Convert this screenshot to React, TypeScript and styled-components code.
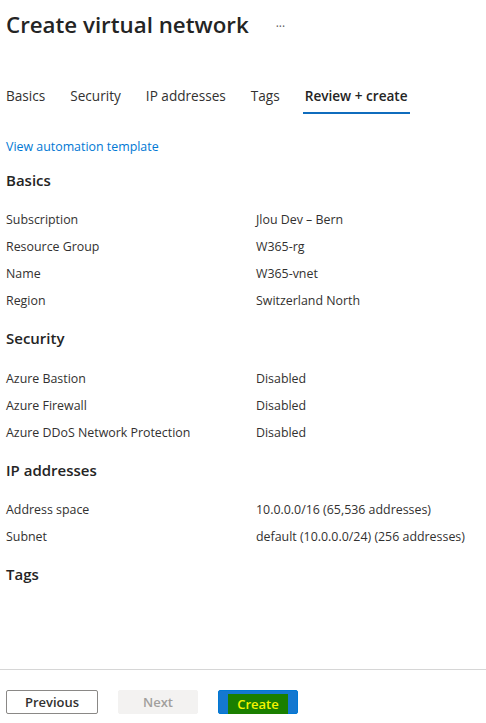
import React from "react";
import styled, { createGlobalStyle } from "styled-components";

const GlobalStyle = createGlobalStyle`
  html, body {
    margin: 0;
    padding: 0;
    background: #ffffff;
  }
  body {
    font-family: "Segoe UI", "Open Sans", "Noto Sans", sans-serif;
    color: #323130;
  }
  * {
    box-sizing: border-box;
  }
`;

type Row = { label: string; value: string };
type Section = { title: string; rows: Row[] };

const tabs = ["Basics", "Security", "IP addresses", "Tags", "Review + create"];

const sections: Section[] = [
  {
    title: "Basics",
    rows: [
      { label: "Subscription", value: "Jlou Dev – Bern" },
      { label: "Resource Group", value: "W365-rg" },
      { label: "Name", value: "W365-vnet" },
      { label: "Region", value: "Switzerland North" },
    ],
  },
  {
    title: "Security",
    rows: [
      { label: "Azure Bastion", value: "Disabled" },
      { label: "Azure Firewall", value: "Disabled" },
      { label: "Azure DDoS Network Protection", value: "Disabled" },
    ],
  },
  {
    title: "IP addresses",
    rows: [
      { label: "Address space", value: "10.0.0.0/16 (65,536 addresses)" },
      { label: "Subnet", value: "default (10.0.0.0/24) (256 addresses)" },
    ],
  },
  { title: "Tags", rows: [] },
];

const App = () => {
  return (
    <>
      <GlobalStyle />
      <Page>
        <TitleRow>
          <Title>Create virtual network</Title>
          <More>···</More>
        </TitleRow>
        <TabBar>
          {tabs.map((t, i) => (
            <Tab key={t} $active={i === tabs.length - 1}>
              {t}
            </Tab>
          ))}
        </TabBar>
        <Content>
          <TemplateLink href="#">View automation template</TemplateLink>
          {sections.map((s) => (
            <SectionBlock key={s.title}>
              <SectionTitle>{s.title}</SectionTitle>
              {s.rows.length > 0 && (
                <Grid>
                  {s.rows.map((r) => (
                    <React.Fragment key={r.label}>
                      <Label>{r.label}</Label>
                      <Value>{r.value}</Value>
                    </React.Fragment>
                  ))}
                </Grid>
              )}
            </SectionBlock>
          ))}
        </Content>
        <Footer>
          <Button type="button" $variant="outline" $width={92}>
            Previous
          </Button>
          <Button type="button" $variant="disabled" $width={80}>
            Next
          </Button>
          <Button type="button" $variant="primary" $width={80}>
            <Highlight>Create</Highlight>
          </Button>
        </Footer>
      </Page>
    </>
  );
};

export default App;

/** page frame */
const Page = styled.div`
  display: flex;
  flex-direction: column;
  height: 100vh;
  min-height: 723px;
`;

/** header */
const TitleRow = styled.div`
  display: flex;
  align-items: center;
  gap: 27px;
  padding: 6px 6px 0;
  height: 44px;
`;
const Title = styled.h1`
  margin: 0;
  font-size: 22.3px;
  line-height: 32px;
  font-weight: 600;
  color: #242424;
`;
const More = styled.span`
  font-size: 12px;
  color: #605e5c;
  padding-top: 2px;
`;

/** tabs */
const TabBar = styled.nav`
  display: flex;
  gap: 25px;
  margin-top: 36px;
  padding: 0 6px;
`;
const Tab = styled.div<{ $active?: boolean }>`
  font-size: 13.6px;
  line-height: 32px;
  color: ${(p) => (p.$active ? "#242424" : "#323130")};
  font-weight: ${(p) => (p.$active ? 600 : 400)};
  border-bottom: 2px solid ${(p) => (p.$active ? "#0f6cbd" : "transparent")};
  padding: 0 2px;
  margin: 0 -2px;
`;

/** review content */
const Content = styled.main`
  flex: 1;
  display: flex;
  flex-direction: column;
  padding: 0 6px;
`;
const TemplateLink = styled.a`
  margin-top: 23px;
  font-size: 12.4px;
  line-height: 20px;
  color: #0078d4;
  text-decoration: none;
  align-self: flex-start;
`;
const SectionBlock = styled.section`
  margin-top: 13px;
  &:first-of-type {
    margin-top: 11.5px;
  }
`;
const SectionTitle = styled.h2`
  margin: 0;
  font-size: 15px;
  line-height: 22px;
  font-weight: 600;
  color: #242424;
`;
const Grid = styled.div`
  display: grid;
  grid-template-columns: 250px 1fr;
  margin-top: 15.5px;
  font-size: 12.4px;
  line-height: 27px;
`;
const Label = styled.div`
  color: #323130;
`;
const Value = styled.div`
  color: #323130;
  white-space: nowrap;
`;

/** bottom buttons */
const Footer = styled.footer`
  display: flex;
  gap: 20px;
  padding: 20px 6px 9px;
  border-top: 1px solid #d6d6d6;
`;
const Button = styled.button<{
  $variant: "outline" | "disabled" | "primary";
  $width: number;
}>`
  display: flex;
  justify-content: center;
  align-items: center;
  width: ${(p) => p.$width}px;
  height: 24px;
  padding: 0;
  border-radius: 2px;
  font-family: inherit;
  font-size: 13px;
  font-weight: 600;
  border: 1px solid
    ${(p) =>
      p.$variant === "outline"
        ? "#8a8886"
        : p.$variant === "primary"
        ? "#0078d4"
        : "#f3f2f1"};
  background: ${(p) =>
    p.$variant === "primary"
      ? "#1478d0"
      : p.$variant === "disabled"
      ? "#f3f2f1"
      : "#ffffff"};
  color: ${(p) =>
    p.$variant === "disabled" ? "#a19f9d" : p.$variant === "outline" ? "#323130" : "#ffffff"};
`;
const Highlight = styled.span`
  align-self: flex-end;
  display: inline-block;
  height: 20px;
  line-height: 20px;
  padding: 0 9px;
  margin-bottom: -1px;
  background: #1a7f00;
  color: #f5f500;
`;
